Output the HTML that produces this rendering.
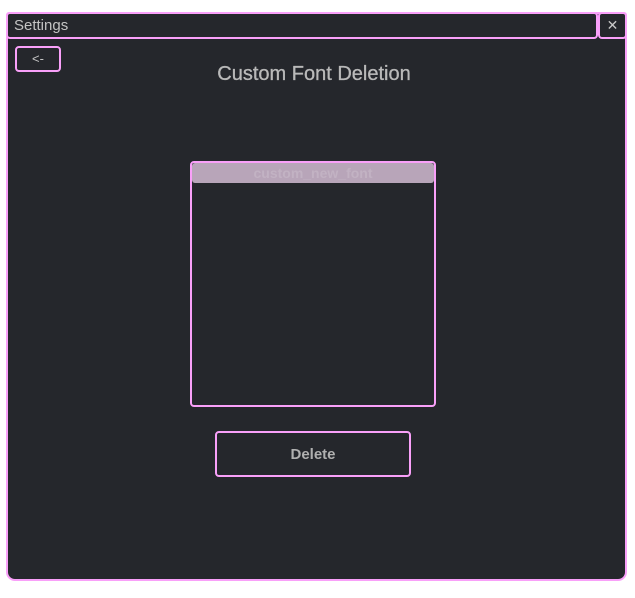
<!DOCTYPE html>
<html><head><style>
*{box-sizing:border-box;margin:0;padding:0}
body{width:635px;height:598px;background:#fff;position:relative;font-family:"Liberation Sans",sans-serif;overflow:hidden}
.win{position:absolute;left:6px;top:12px;width:621px;height:569px;background:#25272c;border:2px solid #f9a0f9;border-radius:3px 3px 9px 9px}
.title{position:absolute;left:6px;top:12px;width:592px;height:27px;border:2px solid #f9a0f9;border-radius:4px;background:#25272c;color:#c4c4c4;font-size:15px;line-height:23px;padding-left:6px}
.close{position:absolute;left:598px;top:12px;width:29px;height:27px;border:2px solid #f9a0f9;border-radius:4px;background:#25272c;color:#c8c8c8;font-size:14px;line-height:23px;text-align:center}
.back{position:absolute;left:15px;top:46px;width:46px;height:26px;border:2px solid #f9a0f9;border-radius:4px;color:#c4c4c4;font-size:13px;text-align:center;line-height:21px}
h1{position:absolute;left:0;width:628px;top:63px;text-align:center;font-size:20px;font-weight:normal;color:#b9b9b9;-webkit-text-stroke:0.3px #b9b9b9}
.list{position:absolute;left:190px;top:161px;width:246px;height:246px;border:2px solid #f9a0f9;border-radius:4px}
.item{position:absolute;left:0;top:0;width:242px;height:20px;background:#b8a5b9;border-radius:3px;color:#c2b2c3;text-align:center;font-size:14px;font-weight:bold;line-height:20px}
.del{position:absolute;left:215px;top:431px;width:196px;height:46px;border:2px solid #f9a0f9;border-radius:4px;color:#b0b0b0;font-size:15px;font-weight:bold;text-align:center;line-height:43px}
</style></head><body>
<div class="win"></div>
<div class="title">Settings</div>
<div class="close">✕</div>
<div class="back">&lt;-</div>
<h1>Custom Font Deletion</h1>
<div class="list"><div class="item">custom_new_font</div></div>
<div class="del">Delete</div>
</body></html>
